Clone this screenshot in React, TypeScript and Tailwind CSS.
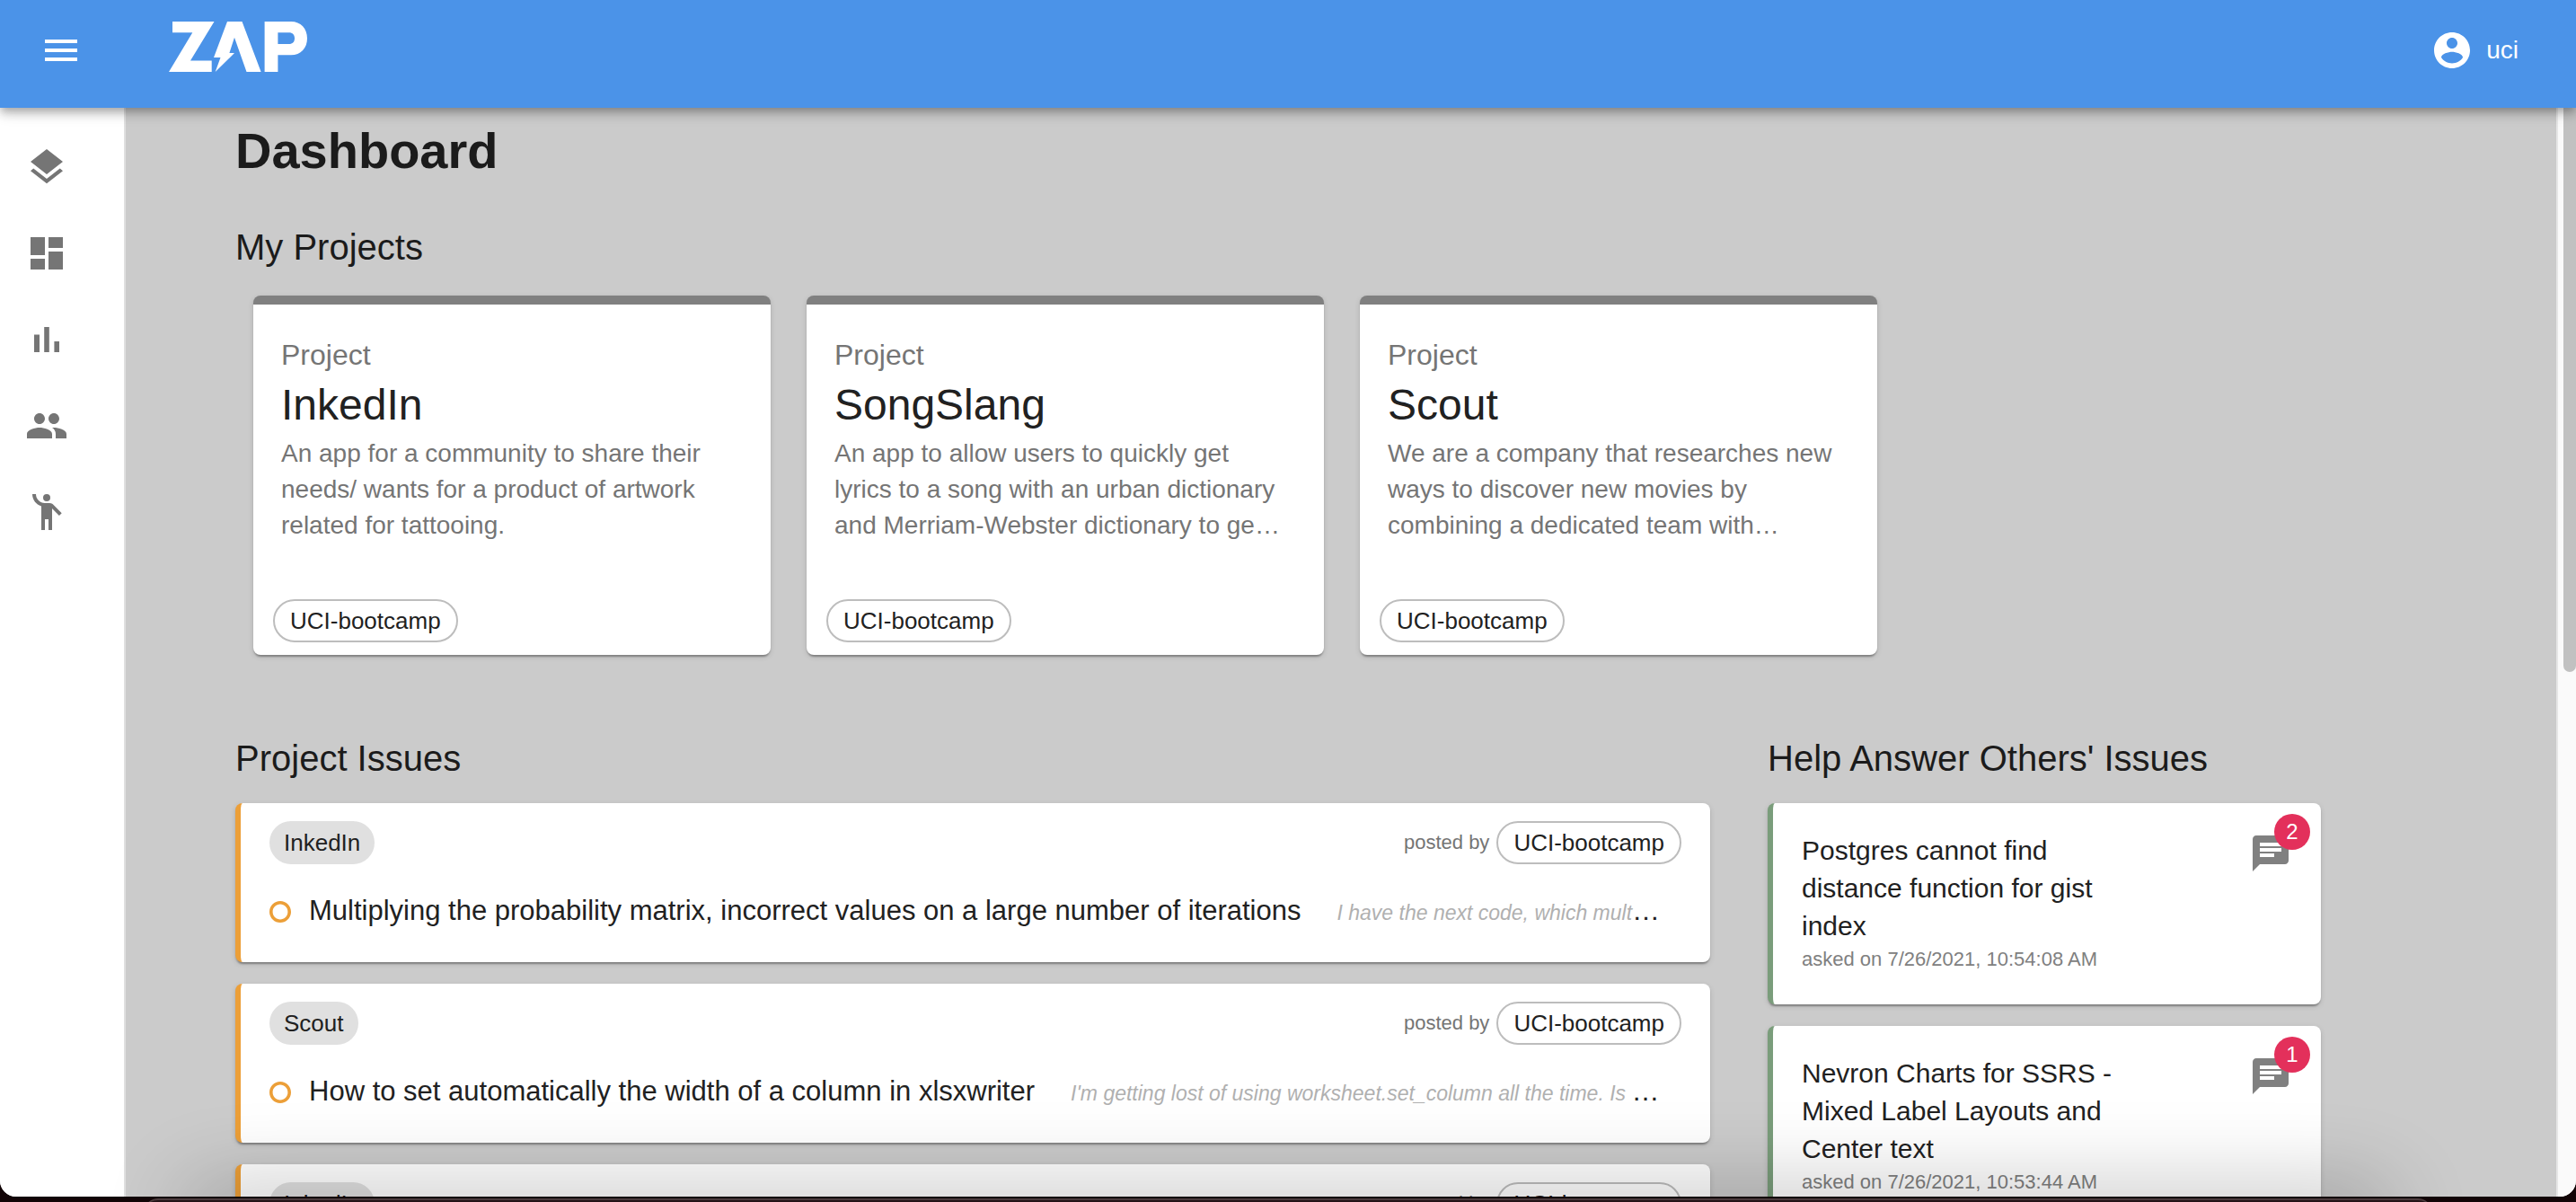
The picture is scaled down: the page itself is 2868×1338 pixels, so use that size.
import type { ReactNode } from "react";

function Icon({ d, className, viewBox = "0 0 24 24" }: { d: string; className: string; viewBox?: string }) {
  return (
    <svg viewBox={viewBox} fill="currentColor" aria-hidden="true" className={className}>
      <path d={d} />
    </svg>
  );
}

const PATHS = {
  menu: "M3 18h18v-2H3v2zm0-5h18v-2H3v2zm0-7v2h18V6H3z",
  account:
    "M12 2C6.48 2 2 6.48 2 12s4.48 10 10 10 10-4.48 10-10S17.52 2 12 2zm0 3c1.66 0 3 1.34 3 3s-1.34 3-3 3-3-1.34-3-3 1.34-3 3-3zm0 14.2c-2.5 0-4.71-1.28-6-3.22.03-1.99 4-3.08 6-3.08 1.99 0 5.97 1.09 6 3.08-1.29 1.94-3.5 3.22-6 3.22z",
  layers:
    "M11.99 18.54l-7.37-5.73L3 14.07l9 7 9-7-1.63-1.27-7.38 5.74zM12 16l7.36-5.73L21 9l-9-7-9 7 1.63 1.27L12 16z",
  dashboard: "M3 13h8V3H3v10zm0 8h8v-6H3v6zm10 0h8V11h-8v10zm0-18v6h8V3h-8z",
  chart: "M5 9.2h3V19H5zM10.6 5h2.8v14h-2.8zm5.6 8H19v6h-2.8z",
  people:
    "M16 11c1.66 0 2.99-1.34 2.99-3S17.66 5 16 5c-1.66 0-3 1.34-3 3s1.34 3 3 3zm-8 0c1.66 0 2.99-1.34 2.99-3S9.66 5 8 5C6.34 5 5 6.34 5 8s1.34 3 3 3zm0 2c-2.33 0-7 1.17-7 3.5V19h14v-2.5c0-2.33-4.67-3.5-7-3.5zm8 0c-.29 0-.62.02-.97.05 1.16.84 1.97 1.97 1.97 3.45V19h6v-2.5c0-2.33-4.67-3.5-7-3.5z",
  person:
    "M15.89 8.11C15.5 7.72 14.83 7 13.53 7h-2.54C8.24 6.99 6 4.75 6 2H4c0 3.16 2.11 5.84 5 6.71V22h2v-6h2v6h2V10.05L18.95 14l1.41-1.41-4.47-4.48z M12 2a2 2 0 1 0 0 4 2 2 0 0 0 0-4z",
  ring: "M12 2C6.48 2 2 6.48 2 12s4.48 10 10 10 10-4.48 10-10S17.52 2 12 2zm0 17c-3.9 0-7-3.1-7-7s3.1-7 7-7 7 3.1 7 7-3.1 7-7 7z",
  chat: "M20 2H4c-1.1 0-1.99.9-1.99 2L2 22l4-4h14c1.1 0 2-.9 2-2V4c0-1.1-.9-2-2-2zM6 9h12v2H6V9zm8 5H6v-2h8v2zm4-6H6V6h12v2z",
};

function Logo() {
  return (
    <svg viewBox="0 0 154 56" fill="white" role="img" aria-label="Zap" className="h-14 w-[154px]">
      <path d="M4 0H50.500L24 43.500H47.700V56H0L26.300 12.300H4Z" />
      <path d="M65 0H81.500L102.600 56H86.500L73 17.700L67.400 35H73L51.700 56L57.500 40H50Z" />
      <path
        fillRule="evenodd"
        d="M106.600 0H136C147 0 154 8 154 18.700S147 37.300 136 37.300H121.400V56H106.600ZM121.400 12.300V25H133.500C138 25 140 22.500 140 18.700S138 12.300 133.500 12.300Z"
      />
    </svg>
  );
}

const NAV = [
  { label: "Layers", d: PATHS.layers },
  { label: "Dashboard", d: PATHS.dashboard },
  { label: "Statistics", d: PATHS.chart },
  { label: "People", d: PATHS.people },
  { label: "Help", d: PATHS.person },
];

const PROJECTS = [
  {
    name: "InkedIn",
    text: "An app for a community to share their needs/ wants for a product of artwork related for tattooing.",
  },
  {
    name: "SongSlang",
    text: "An app to allow users to quickly get lyrics to a song with an urban dictionary and Merriam-Webster dictionary to ge…",
  },
  {
    name: "Scout",
    text: "We are a company that researches new ways to discover new movies by combining a dedicated team with…",
  },
];

const ISSUES = [
  {
    project: "InkedIn",
    title: "Multiplying the probability matrix, incorrect values on a large number of iterations",
    text: "I have the next code, which mult",
  },
  {
    project: "Scout",
    title: "How to set automatically the width of a column in xlsxwriter",
    text: "I'm getting lost of using worksheet.set_column all the time. Is ",
  },
  { project: "InkedIn", title: "", text: "" },
];

const QUESTIONS = [
  { title: "Postgres cannot find distance function for gist index", date: "7/26/2021, 10:54:08 AM", count: 2 },
  { title: "Nevron Charts for SSRS - Mixed Label Layouts and Center text", date: "7/26/2021, 10:53:44 AM", count: 1 },
];

const CARD_SHADOW =
  "shadow-[0_4px_2px_-2px_rgba(0,0,0,0.2),0_2px_2px_0_rgba(0,0,0,0.14),0_2px_6px_0_rgba(0,0,0,0.12)]";

function OutlinedChip({ children }: { children: ReactNode }) {
  return (
    <button className="flex h-12 items-center rounded-full border-2 border-[#bdbdbd] bg-transparent px-[17px] text-[26px] leading-8">
      {children}
    </button>
  );
}

export default function App() {
  return (
    <div className="h-screen overflow-hidden bg-[#120406] font-['Liberation_Sans',sans-serif] text-[#212121]">
      <div className="relative flex h-[calc(100vh-6px)] flex-col overflow-hidden rounded-b-[18px] bg-[#fafafa]">
        <header className="relative z-10 flex h-[120px] shrink-0 items-start bg-[#4b93e8] pl-11 pr-16 text-white shadow-[0_4px_8px_-2px_rgba(0,0,0,0.2),0_8px_10px_0_rgba(0,0,0,0.14),0_2px_20px_0_rgba(0,0,0,0.12)]">
          <button aria-label="Open menu" className="mt-8">
            <Icon d={PATHS.menu} className="size-12" />
          </button>
          <a href="#home" className="ml-24 mt-6">
            <Logo />
          </a>
          <button className="ml-auto mt-8 flex h-12 items-center gap-3.5 text-[28px] leading-8">
            <Icon d={PATHS.account} className="size-12" />
            uci
          </button>
        </header>

        <div className="flex min-h-0 flex-1">
          <nav className="flex w-[140px] shrink-0 flex-col gap-12 border-r-2 border-[#e0e0e0] bg-white pl-7 pt-[42px] text-[#757575]">
            {NAV.map((n) => (
              <a key={n.label} href={"#" + n.label.toLowerCase()} aria-label={n.label} className="size-12">
                <Icon d={n.d} className="size-12" />
              </a>
            ))}
          </nav>

          <main className="min-w-0 flex-1 overflow-hidden border-r-2 border-[#e6e6e6] bg-[#cbcbcb] pl-[122px] pr-[262px] text-[#1b1b1b]">
            <h1 className="mt-4 text-[56px] font-bold leading-[64px]">Dashboard</h1>

            <section className="mt-[47px]">
              <h2 className="text-[40px] leading-[56px]">My Projects</h2>
              <div className="ml-5 mt-[26px] flex gap-10">
                {PROJECTS.map((p) => (
                  <article
                    key={p.name}
                    className={"flex h-[400px] w-[576px] flex-col rounded-lg border-t-10 border-[#808080] bg-white text-[#212121] " + CARD_SHADOW}
                  >
                    <div className="pl-[31px] pr-11 pt-7">
                      <p className="text-[32px] leading-[56px] text-[#757575]">Project</p>
                      <h3 className="text-[48px] leading-[56px]">{p.name}</h3>
                      <p className="mt-1.5 text-[28px] leading-10 text-[#757575]">{p.text}</p>
                    </div>
                    <div className="mt-auto flex pb-[14px] pl-[22px]">
                      <OutlinedChip>UCI-bootcamp</OutlinedChip>
                    </div>
                  </article>
                ))}
              </div>
            </section>

            <div className="mt-[87px] flex gap-16">
              <section className="w-[1642px] shrink-0">
                <h2 className="text-[40px] leading-[56px]">Project Issues</h2>
                <div className="mt-[22px] flex flex-col gap-6">
                  {ISSUES.map((q, i) => (
                    <article
                      key={i}
                      className={"h-[177px] rounded-lg border-l-6 border-[#ec9f38] bg-white pl-8 pr-8 pt-5 text-[#212121] " + CARD_SHADOW}
                    >
                      <div className="flex items-center justify-between">
                        <button className="flex h-12 items-center rounded-full bg-[#e0e0e0] px-4 text-[26px] leading-8">
                          {q.project}
                        </button>
                        <div className="flex items-center gap-2">
                          <span className="text-[22px] leading-8 text-[#757575]">posted by</span>
                          <OutlinedChip>UCI-bootcamp</OutlinedChip>
                        </div>
                      </div>
                      {q.title && (
                        <div className="mt-8 flex items-center gap-5">
                          <Icon d={PATHS.ring} viewBox="2 2 20 20" className="size-6 shrink-0 text-[#ec9f38]" />
                          <h3 className="whitespace-pre text-[31px] leading-10">
                            {q.title}
                            <em className="ml-10 text-[23px] text-[#b0b0b0]">{q.text}</em>…
                          </h3>
                        </div>
                      )}
                    </article>
                  ))}
                </div>
              </section>

              <section className="w-[616px] shrink-0">
                <h2 className="text-[40px] leading-[56px]">Help Answer Others' Issues</h2>
                <div className="mt-[22px] flex flex-col gap-6">
                  {QUESTIONS.map((q) => (
                    <article
                      key={q.date}
                      className={"flex h-[224px] items-start justify-between rounded-lg border-l-6 border-[#7a9d7b] bg-white pl-8 pr-8 pt-8 text-[#212121] " + CARD_SHADOW}
                    >
                      <div className="w-[380px]">
                        <h3 className="text-[30px] leading-[42px]">{q.title}</h3>
                        <p className="text-[22px] leading-8 text-[#808080]">asked on {q.date}</p>
                      </div>
                      <div className="relative text-[#808080]">
                        <Icon d={PATHS.chat} className="size-12" />
                        <span className="absolute -right-5 -top-5 flex size-10 items-center justify-center rounded-full bg-[#e3305b] text-[24px] leading-6 text-white">
                          {q.count}
                        </span>
                      </div>
                    </article>
                  ))}
                </div>
              </section>
            </div>
          </main>

          <div className="flex w-5 shrink-0 justify-end bg-[#fafafa]">
            <div className="h-[628px] w-[14px] rounded-b-full bg-[#c1c1c1]" />
          </div>
        </div>
        <div className="pointer-events-none absolute inset-x-[210px] -bottom-[60px] h-[60px] rounded-[40px] shadow-[0_-6px_90px_8px_rgba(0,0,0,0.22)]" />
      </div>
      <div className="mx-[160px] mt-0.5 h-4 rounded-t-2xl border-t-2 border-[#4a3a3c] bg-[#231216]" />
    </div>
  );
}
